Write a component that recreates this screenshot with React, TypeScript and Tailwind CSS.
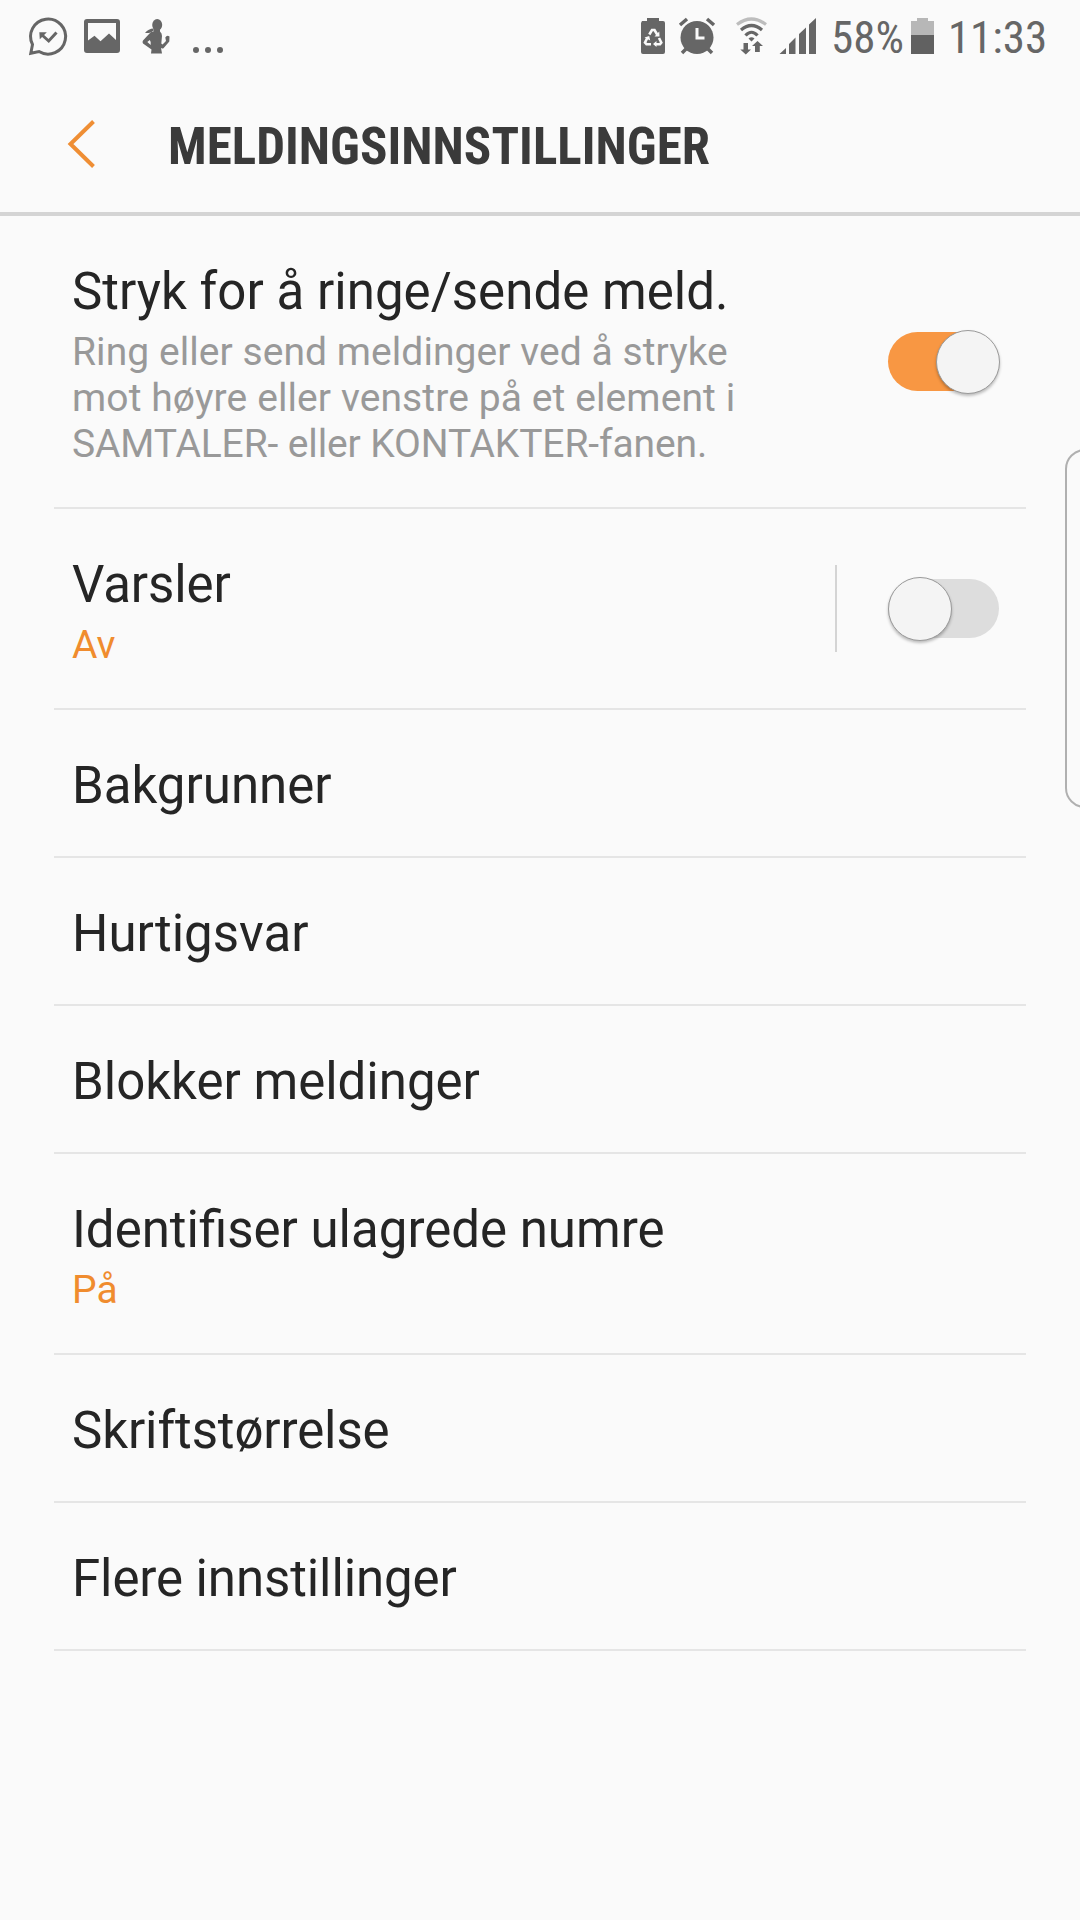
import type { ReactNode } from "react";

function Toggle({ on }: { on: boolean }) {
  return (
    <div className={on ? "relative mt-0.5 h-[59px] w-[111px] rounded-full bg-[#f89743]" : "relative mt-0.5 h-[59px] w-[111px] rounded-full bg-[#dddddd]"}>
      <div
        className={
          on
            ? "absolute -top-0.5 left-12 size-16 rounded-full border border-[#9a9a9a] bg-[#f4f4f4] shadow-[0_2px_3px_rgba(0,0,0,0.25)]"
            : "absolute -top-0.5 left-0 size-16 rounded-full border border-[#9a9a9a] bg-[#f4f4f4] shadow-[0_2px_3px_rgba(0,0,0,0.25)]"
        }
      />
    </div>
  );
}

function Row({ title, value, tall, tight, children }: { title: string; value?: string; tall?: boolean; tight?: boolean; children?: ReactNode }) {
  return (
    <li className={tall ? "flex h-[201px] border-b-2 border-[#e5e5e5] pl-[18px]" : "flex h-[148px] border-b-2 border-[#e5e5e5] pl-[18px]"}>
      <div className="flex-1 pt-[46px]">
        <div className={tight ? "text-[51px] leading-[60px] tracking-[-0.1px] text-[#252525]" : "text-[51px] leading-[60px] text-[#252525]"}>{title}</div>
        {value && <div className="text-[39px] leading-[60px] text-[#f08c2e]">{value}</div>}
      </div>
      {children}
    </li>
  );
}

function StatusBar() {
  return (
    <div className="flex h-[74px] text-[#666666]">
      <svg width="240" height="74" viewBox="0 0 240 74" fill="currentColor">
        <path d="M32.500 44.500A17.500 17.500 0 1 1 39 51.500L30.800 53.200Z" fill="none" stroke="currentColor" strokeWidth="3" />
        <path d="M42 35L48.700 41L56.500 32.500" fill="none" stroke="currentColor" strokeWidth="3" />
        <path d="M39.300 32.300h7.500l-7 7z" />
        <path fillRule="evenodd" d="M87 19h30a3 3 0 0 1 3 3v28a3 3 0 0 1-3 3H87a3 3 0 0 1-3-3V22a3 3 0 0 1 3-3zM88 23v17.500l6.500-4.800 6 5.500L109 33.500l7 6.500V23z" />
        <ellipse cx="157.200" cy="24.900" rx="5" ry="5.800" />
        <path d="M153.500 28.500Q148.500 28.500 145 33Q151 33.500 153.500 30.500Z" />
        <path fillRule="evenodd" d="M153.500 27H160V31.500Q162 33 162 36L161.300 43.500L162.500 44.500L166 41L165.300 37.500Q167 34.500 169.500 36.500L169.300 41.500L163.500 48.200Q162 48.800 161 48L162 53.500H151L151.500 49.500L143 43.500Q142 42 143 40.500L149.500 33.500Q151 31.500 153.500 31.500ZM149.800 40L147.300 42L150.700 45Q151.300 42 149.800 40Z" />
        <circle cx="196" cy="50" r="3" /><circle cx="208" cy="50" r="3" /><circle cx="220" cy="50" r="3" />
      </svg>
      <svg className="ml-[400px]" width="180" height="74" viewBox="640 0 180 74" fill="currentColor">
        <path d="M642 21h5v-3h12v3h4a2 2 0 0 1 2 2v29a2 2 0 0 1-2 2h-20a2 2 0 0 1-2-2V23z" />
        <path d="M649.300 34.500L652 30h2.500L657.500 35M647.500 37.500L645 42.500L646.500 44.200H651M659 38L661.300 42.500L660 44.200H655" fill="none" stroke="#fafafa" strokeWidth="2.600" />
        <path d="M654.500 36.500h5l-.2-5zM644.500 37.500l4.700-1.500 1 4.500zM656.500 41v6l-3.500-3z" fill="#fafafa" />
        <circle cx="697" cy="37.500" r="16.500" />
        <path d="M697 28v10h7.500" fill="none" stroke="#fafafa" strokeWidth="3" />
        <path d="M680 25l7-6M714 25l-7-6M682 53l5-5M712 53l-5-5" stroke="currentColor" strokeWidth="3.500" />
        <g fill="none" stroke="currentColor" strokeWidth="3.200">
          <path d="M737 24.500Q751.500 13.500 766 24.500" stroke="#bdbdbd" />
          <path d="M741 30Q751.500 21 762 30" /><path d="M745.500 35.500Q751.500 29 757.500 35.500" />
        </g>
        <path d="M748.500 38.500Q751.500 36 754.500 38.500L751.500 41.500ZM743.500 43h4.500v6.500h3L745.800 54.500l-5.500-5h3.200zM755 52v-6h-3l5.500-5 5.500 5h-3.200v6z" />
        <path d="M779.500 54l6.500-6v6zM789 54V44l6.500-6.500V54zM799 54V34l7-6.500V54zM809 54V24.500l7-6.500V54z" />
      </svg>
      <span className="ml-[11px] mt-[11px] text-[45px] leading-[54px] [font-family:'Roboto_Condensed',Roboto,sans-serif] [font-stretch:75%]">58%</span>
      <svg className="ml-[7px]" width="23" height="74" viewBox="0 0 23 74">
        <path fill="#b7b7b7" d="M0 21h6v-3h11v3h6v14H0z" /><path fill="#616161" d="M0 35h23v19H0z" />
      </svg>
      <span className="ml-[14px] mt-[11px] text-[45px] leading-[54px] [font-family:'Roboto_Condensed',Roboto,sans-serif] [font-stretch:75%]">11:33</span>
    </div>
  );
}

export default function App() {
  return (
    <main className="relative h-[1920px] w-[1080px] overflow-hidden bg-[#fafafa] font-[Roboto,sans-serif]">
      <StatusBar />
      <header className="flex h-[142px] border-b-4 border-[#d4d4d4]">
        <svg className="ml-[66px] mt-[44px]" width="32" height="52" viewBox="66 118 32 52" fill="none" stroke="#ef8e34" strokeWidth="4">
          <path d="M93.500 121.500L70.500 144L93.500 166.500" />
        </svg>
        <h1 className="ml-[70px] mt-[43px] text-[51px] font-bold leading-[60px] tracking-[0.03px] text-[#3a3a3a] [font-family:'Roboto_Condensed',Roboto,sans-serif] [font-stretch:75%]">MELDINGSINNSTILLINGER</h1>
      </header>
      <ul className="mx-[54px]">
        <li className="flex h-[293px] border-b-2 border-[#e5e5e5] pl-[18px]">
          <div className="flex-1 pt-[46px]">
            <div className="text-[51px] leading-[60px] tracking-[0.04px] text-[#252525]">Stryk for å ringe/sende meld.</div>
            <div className="mt-[7px] text-[39px] leading-[46px] text-[#999999]">
              <div className="tracking-[0.06px]">Ring eller send meldinger ved å stryke</div>
              <div className="tracking-[0.1px]">mot høyre eller venstre på et element i</div>
              <div className="tracking-[-0.12px]">SAMTALER- eller KONTAKTER-fanen.</div>
            </div>
          </div>
          <div className="mr-[27px] mt-[114px]"><Toggle on /></div>
        </li>
        <Row title="Varsler" value="Av" tall tight>
          <div className="mt-14 h-[87px] w-0.5 bg-[#d4d4d4]" />
          <div className="ml-[51px] mr-[27px] mt-[68px]"><Toggle on={false} /></div>
        </Row>
        <Row title="Bakgrunner" />
        <Row title="Hurtigsvar" />
        <Row title="Blokker meldinger" />
        <Row title="Identifiser ulagrede numre" value="På" tall />
        <Row title="Skriftstørrelse" tight />
        <Row title="Flere innstillinger" tight />
      </ul>
      <div className="absolute left-[1065px] top-[449px] h-[359px] w-10 rounded-[22px] border-2 border-[#b0b0b0]" />
    </main>
  );
}
